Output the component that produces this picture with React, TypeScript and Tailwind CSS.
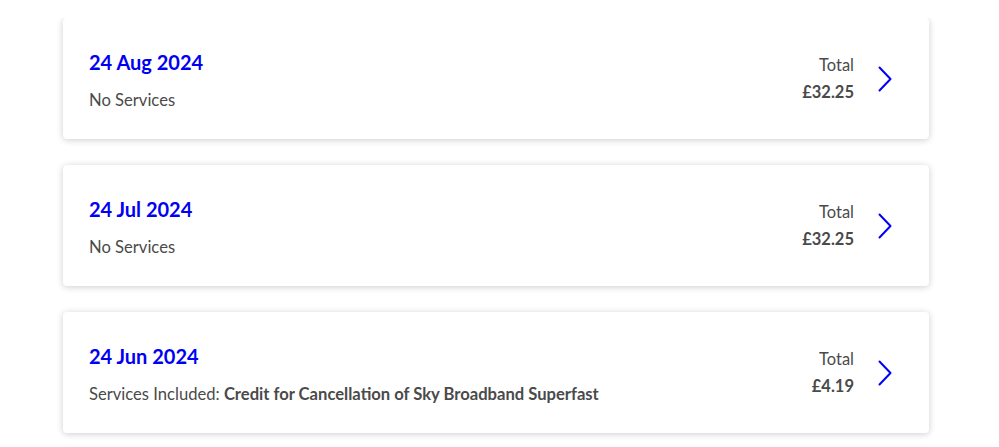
import { ReactNode } from "react";

type Statement = {
    date: string;
    total: string;
    services: ReactNode;
};

const statements: Statement[] = [
    { date: "24 Aug 2024", total: "£32.25", services: "No Services" },
    { date: "24 Jul 2024", total: "£32.25", services: "No Services" },
    {
        date: "24 Jun 2024",
        total: "£4.19",
        services: (
            <>
                Services Included:{" "}
                <span className="font-bold">
                    Credit for Cancellation of Sky Broadband Superfast
                </span>
            </>
        ),
    },
];

export default function App() {
    return (
        <div className="min-h-[447px] bg-white font-['Lato',sans-serif]">
            <div className="h-[18px]" />
            <div className="overflow-hidden px-[20px] pb-[20px]">
                <div className="ml-[43px] flex w-[866px] flex-col gap-[26px]">
                    {statements.map((statement) => (
                        <StatementCard key={statement.date} statement={statement} />
                    ))}
                </div>
            </div>
        </div>
    );
}

function StatementCard({ statement }: { statement: Statement }) {
    return (
        <div className="flex h-[121px] items-center justify-between rounded-[4px] bg-white pl-[26px] pr-[37px] shadow-[0_1px_7px_rgba(0,0,0,0.2)]">
            <div className="flex flex-col pt-[3px]">
                <p className="text-[20px] font-bold leading-[28px] text-[#0000f5]">
                    {statement.date}
                </p>
                <p className="mt-[12px] text-[16.6px] leading-[24px] text-[#4a4a4a]">
                    {statement.services}
                </p>
            </div>
            <div className="flex items-center gap-[24px]">
                <div className="flex flex-col items-end text-[16.5px] leading-[24px] text-[#4a4a4a]">
                    <span>Total</span>
                    <span className="mt-[3px] font-bold">{statement.total}</span>
                </div>
                <svg
                    width="14"
                    height="26"
                    viewBox="0 0 14 26"
                    fill="none"
                    aria-hidden="true"
                >
                    <path
                        d="M1.5 1.5 L12.5 13 L1.5 24.5"
                        stroke="#0000f5"
                        strokeWidth="2"
                        strokeLinecap="round"
                        strokeLinejoin="round"
                    />
                </svg>
            </div>
        </div>
    );
}
